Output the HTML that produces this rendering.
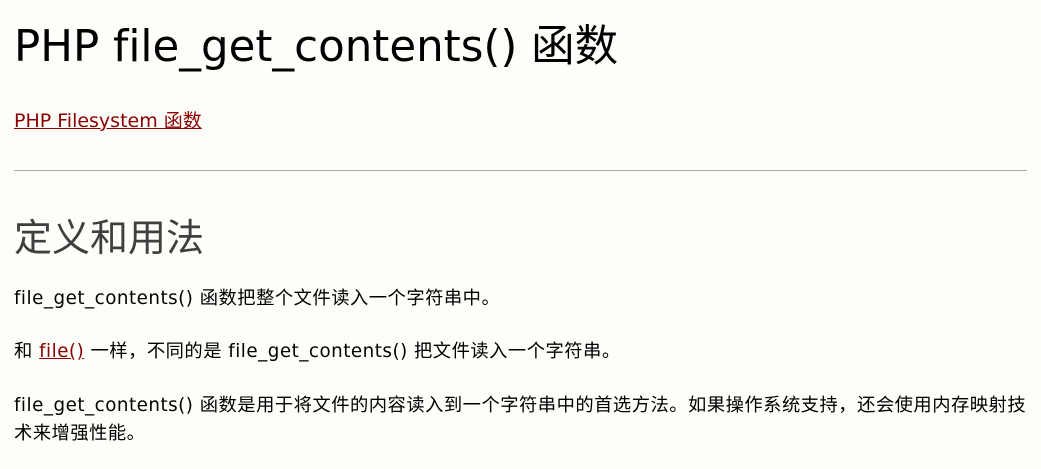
<!DOCTYPE html>
<html><head><meta charset="utf-8"><style>
body{margin:0;background:#fdfdf9;font-family:"DejaVu Sans","Noto Sans CJK SC",sans-serif;color:#000;width:1041px;height:469px;overflow:hidden;font-variant-ligatures:none}
h1{position:absolute;left:14px;top:11px;margin:0;font-size:43.5px;font-weight:normal;white-space:nowrap;letter-spacing:0}
a{color:#8b0000;text-decoration:underline}
.lk{position:absolute;left:14px;top:106px;font-size:19px}
hr{position:absolute;left:14px;width:1013px;top:170px;margin:0;border:0;border-top:1px solid #aaa}
h2{position:absolute;left:14px;top:207px;margin:0;font-size:38px;font-weight:normal;color:#3f3f3f;font-family:"Noto Sans CJK SC",sans-serif}
p{position:absolute;left:14px;width:1027px;margin:0;font-size:18.3px;line-height:28px;letter-spacing:0.5px;white-space:nowrap}
</style></head><body>
<h1>PHP file_get_contents() 函数</h1>
<div class="lk"><a>PHP Filesystem 函数</a></div>
<hr>
<h2>定义和用法</h2>
<p style="top:285px">file_get_contents() 函数把整个文件读入一个字符串中。</p>
<p style="top:338px">和 <a>file()</a> 一样，不同的是 file_get_contents() 把文件读入一个字符串。</p>
<p style="top:392px">file_get_contents() 函数是用于将文件的内容读入到一个字符串中的首选方法。如果操作系统支持，还会使用内存映射技<br>术来增强性能。</p>
</body></html>
